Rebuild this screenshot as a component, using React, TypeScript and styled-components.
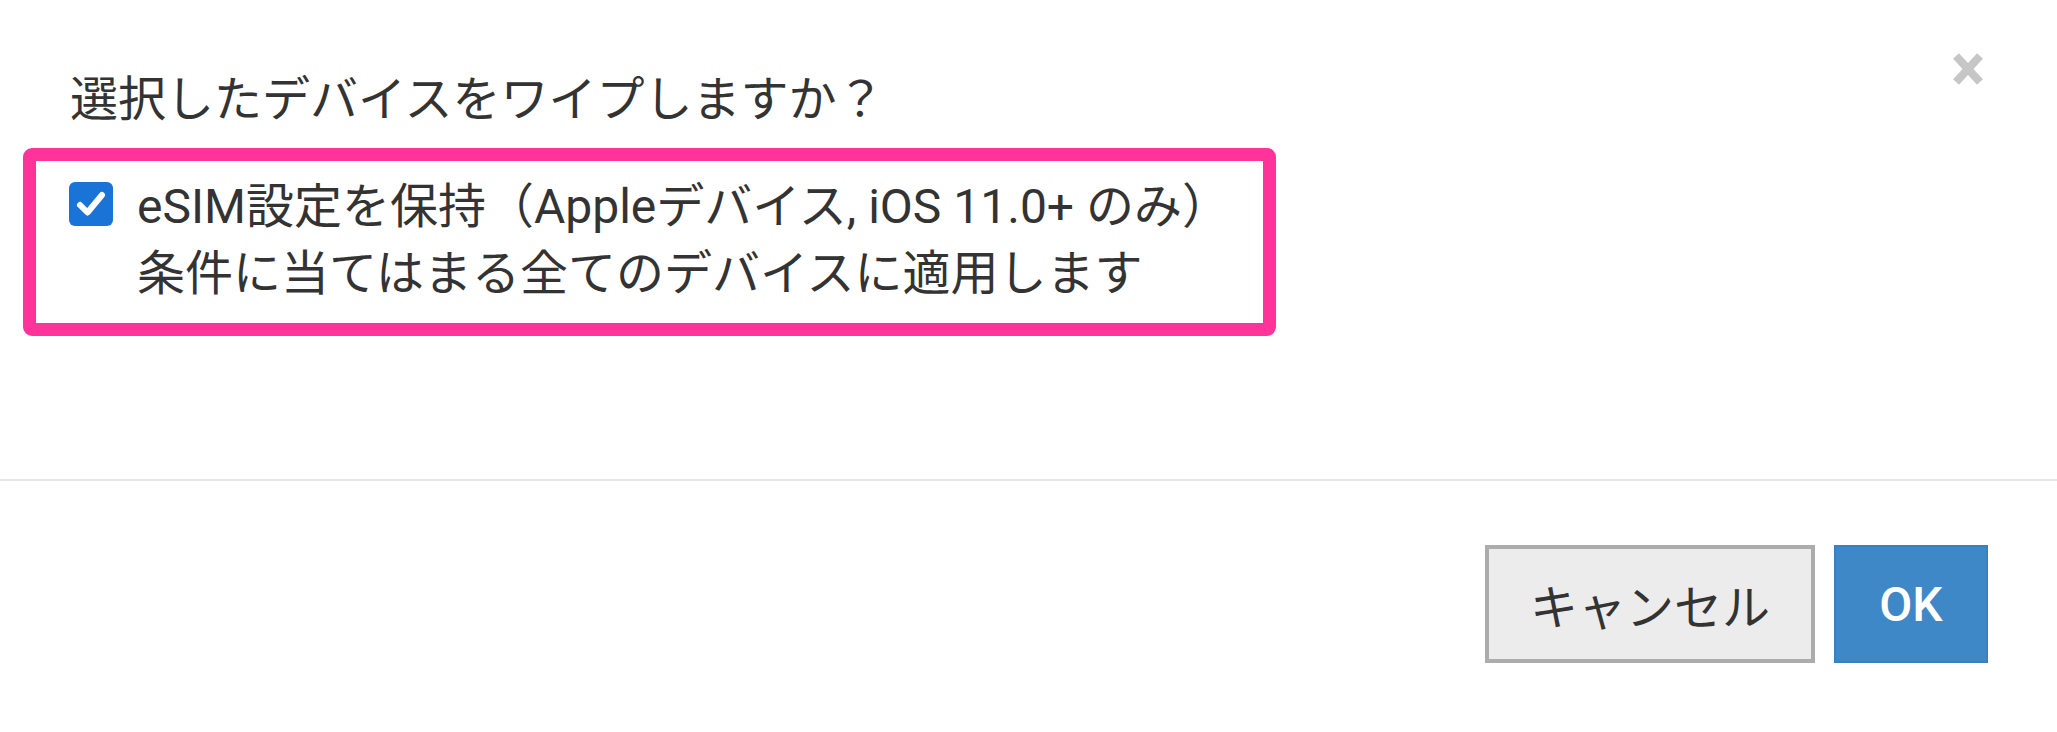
import { useState } from 'react';
import styled, { createGlobalStyle } from 'styled-components';

const GlobalStyle = createGlobalStyle`
    html, body {
        margin: 0;
        padding: 0;
        background: #ffffff;
    }
    body {
        font-family: Roboto, "Noto Sans CJK JP", sans-serif;
        color: #333333;
    }
`;

function CloseIcon(): JSX.Element {
    return (
        <svg width="38" height="34" viewBox="0 0 38 34" aria-hidden="true">
            <path d="M7 4 L31 30 M31 4 L7 30" stroke="#c6c6c6" strokeWidth="8" strokeLinecap="butt" />
        </svg>
    );
}

function CheckMark(): JSX.Element {
    return (
        <svg width="34" height="34" viewBox="0 0 34 34" aria-hidden="true">
            <path d="M6 18 L13.5 25.5 L28 8" fill="none" stroke="#ffffff" strokeWidth="6" strokeLinecap="round" strokeLinejoin="round" />
        </svg>
    );
}

export default function App(): JSX.Element {
    const [keepEsim, setKeepEsim] = useState<boolean>(true);

    return (
        <>
            <GlobalStyle />
            <S_Dialog>
                <S_Header>
                    <S_Title>選択したデバイスをワイプしますか？</S_Title>
                    <S_CloseButton type="button" aria-label="閉じる">
                        <CloseIcon />
                    </S_CloseButton>
                </S_Header>
                {/* ピンクの枠はハイライト用 */}
                <S_Highlight>
                    <S_OptionRow onClick={() => setKeepEsim(!keepEsim)}>
                        <S_CheckBox $checked={keepEsim}>{keepEsim && <CheckMark />}</S_CheckBox>
                        <S_OptionText>
                            <S_Line>eSIM設定を保持（Appleデバイス, iOS 11.0+ のみ）</S_Line>
                            <S_Line>条件に当てはまる全てのデバイスに適用します</S_Line>
                        </S_OptionText>
                    </S_OptionRow>
                </S_Highlight>
                <S_Footer>
                    <S_Button type="button" $width={330}>
                        キャンセル
                    </S_Button>
                    <S_Button type="button" $width={154} $primary>
                        OK
                    </S_Button>
                </S_Footer>
            </S_Dialog>
        </>
    );
}

const S_Dialog = styled.div`
    display: flex;
    flex-direction: column;
    width: 100%;
    height: 732px;
    background: #ffffff;
    overflow: hidden;
`;
const S_Header = styled.div`
    display: flex;
    justify-content: space-between;
    align-items: flex-start;
    padding: 0 70px 0 70px;
`;
const S_Title = styled.h2`
    margin: 66px 0 0;
    font-size: 48px;
    font-weight: 400;
    line-height: 67px;
    color: #333333;
`;
const S_CloseButton = styled.button`
    display: flex;
    margin-top: 52px;
    padding: 0;
    border: none;
    background: transparent;
    cursor: pointer;
`;
const S_Highlight = styled.div`
    width: 1253px;
    box-sizing: border-box;
    margin: 15px 0 0 23px;
    padding: 12px 0 16px 33px;
    border: 13px solid #ff3399;
    border-radius: 9px;
`;
const S_OptionRow = styled.label`
    display: flex;
    align-items: flex-start;
    gap: 24px;
    cursor: pointer;
`;
const S_CheckBox = styled.span<{ $checked: boolean }>`
    display: flex;
    align-items: center;
    justify-content: center;
    flex-shrink: 0;
    width: 44px;
    height: 44px;
    margin-top: 9px;
    box-sizing: border-box;
    border-radius: 6px;
    background: ${(p) => (p.$checked ? '#1a74d8' : '#ffffff')};
    border: ${(p) => (p.$checked ? 'none' : '3px solid #8a8a8a')};
`;
const S_OptionText = styled.div`
    display: flex;
    flex-direction: column;
`;
const S_Line = styled.span`
    font-size: 48px;
    line-height: 67px;
    color: #333333;
    white-space: nowrap;
`;
const S_Footer = styled.div`
    display: flex;
    justify-content: flex-end;
    gap: 19px;
    margin-top: auto;
    padding: 64px 69px 69px 0;
    border-top: 2px solid #e6e6e6;
`;
const S_Button = styled.button<{ $primary?: boolean; $width: number }>`
    width: ${(p) => p.$width}px;
    height: 118px;
    box-sizing: border-box;
    padding: 0;
    font-family: Roboto, "Noto Sans CJK JP", sans-serif;
    font-size: 48px;
    font-weight: ${(p) => (p.$primary ? 500 : 400)};
    color: ${(p) => (p.$primary ? '#ffffff' : '#333333')};
    background: ${(p) => (p.$primary ? '#3f88c8' : '#ececec')};
    border: ${(p) => (p.$primary ? '2px solid #3a7fbf' : '4px solid #acacac')};
    border-radius: 0;
    cursor: pointer;
`;
